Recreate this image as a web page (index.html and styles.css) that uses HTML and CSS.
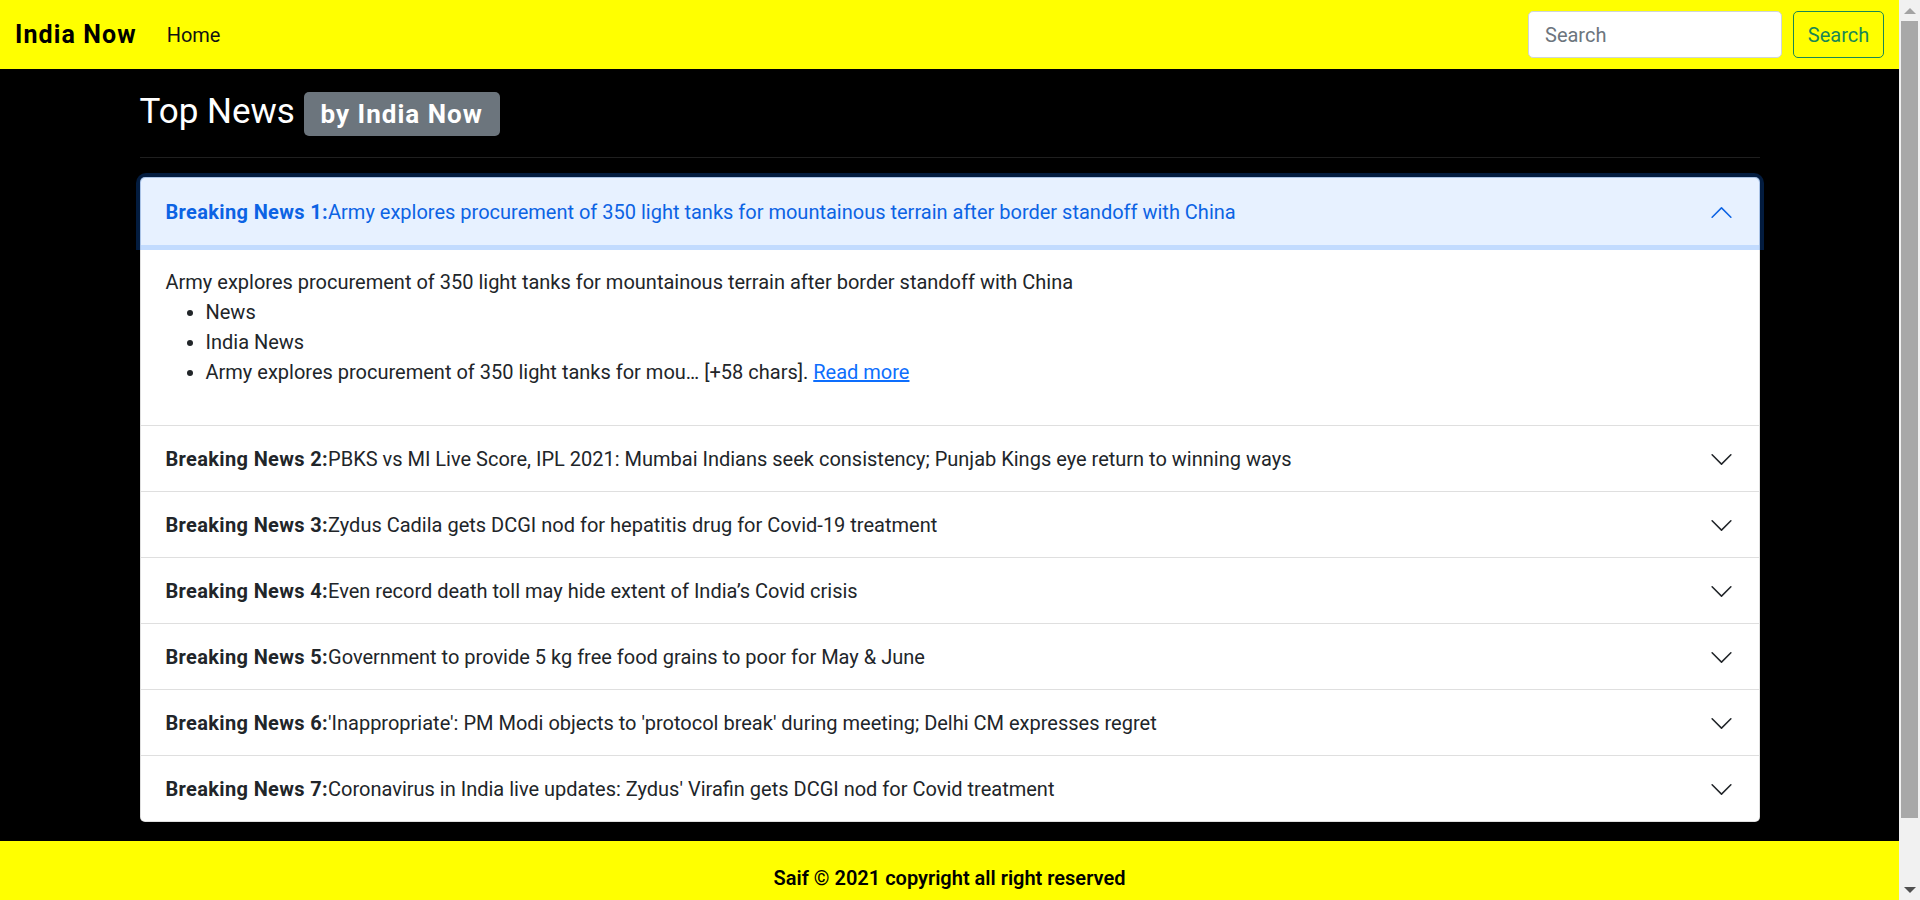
FILE: index.html
```html
<!DOCTYPE html>
<html lang="en">
<head>
<meta charset="utf-8">
<title>India Now</title>
<link rel="stylesheet" href="styles.css">
</head>
<body>
<nav class="navbar">
  <div class="nav-left">
    <a class="brand" href="#">India Now</a>
    <a class="nav-link" href="#">Home</a>
  </div>
  <form class="search">
    <input class="search-input" type="search" placeholder="Search">
    <button class="search-btn" type="button">Search</button>
  </form>
</nav>

<main class="main">
  <div class="container">
    <h3 class="title">Top News <span class="badge">by India Now</span></h3>
    <hr class="rule">
    <div class="accordion">
      <div class="acc-item">
        <button class="acc-btn open" type="button"><span class="acc-label"><b class="acc-num">Breaking News 1:</b>Army explores procurement of 350 light tanks for mountainous terrain after border standoff with China</span><svg class="chev" viewBox="0 0 16 16"><path d="M1.646 4.646a.5.5 0 0 1 .708 0L8 10.293l5.646-5.647a.5.5 0 0 1 .708.708l-6 6a.5.5 0 0 1-.708 0l-6-6a.5.5 0 0 1 0-.708z"/></svg></button>
        <div class="acc-body">
          Army explores procurement of 350 light tanks for mountainous terrain after border standoff with China
          <ul class="acc-list">
            <li>News</li>
            <li>India News</li>
            <li>Army explores procurement of 350 light tanks for mou… [+58 chars]. <a class="more" href="#">Read more</a></li>
          </ul>
        </div>
      </div>
      <div class="acc-item">
        <button class="acc-btn" type="button"><span class="acc-label"><b class="acc-num">Breaking News 2:</b>PBKS vs MI Live Score, IPL 2021: Mumbai Indians seek consistency; Punjab Kings eye return to winning ways</span><svg class="chev" viewBox="0 0 16 16"><path d="M1.646 4.646a.5.5 0 0 1 .708 0L8 10.293l5.646-5.647a.5.5 0 0 1 .708.708l-6 6a.5.5 0 0 1-.708 0l-6-6a.5.5 0 0 1 0-.708z"/></svg></button>
      </div>
      <div class="acc-item">
        <button class="acc-btn" type="button"><span class="acc-label"><b class="acc-num">Breaking News 3:</b>Zydus Cadila gets DCGI nod for hepatitis drug for Covid-19 treatment</span><svg class="chev" viewBox="0 0 16 16"><path d="M1.646 4.646a.5.5 0 0 1 .708 0L8 10.293l5.646-5.647a.5.5 0 0 1 .708.708l-6 6a.5.5 0 0 1-.708 0l-6-6a.5.5 0 0 1 0-.708z"/></svg></button>
      </div>
      <div class="acc-item">
        <button class="acc-btn" type="button"><span class="acc-label"><b class="acc-num">Breaking News 4:</b>Even record death toll may hide extent of India’s Covid crisis</span><svg class="chev" viewBox="0 0 16 16"><path d="M1.646 4.646a.5.5 0 0 1 .708 0L8 10.293l5.646-5.647a.5.5 0 0 1 .708.708l-6 6a.5.5 0 0 1-.708 0l-6-6a.5.5 0 0 1 0-.708z"/></svg></button>
      </div>
      <div class="acc-item">
        <button class="acc-btn" type="button"><span class="acc-label"><b class="acc-num">Breaking News 5:</b>Government to provide 5 kg free food grains to poor for May &amp; June</span><svg class="chev" viewBox="0 0 16 16"><path d="M1.646 4.646a.5.5 0 0 1 .708 0L8 10.293l5.646-5.647a.5.5 0 0 1 .708.708l-6 6a.5.5 0 0 1-.708 0l-6-6a.5.5 0 0 1 0-.708z"/></svg></button>
      </div>
      <div class="acc-item">
        <button class="acc-btn" type="button"><span class="acc-label"><b class="acc-num">Breaking News 6:</b>'Inappropriate': PM Modi objects to 'protocol break' during meeting; Delhi CM expresses regret</span><svg class="chev" viewBox="0 0 16 16"><path d="M1.646 4.646a.5.5 0 0 1 .708 0L8 10.293l5.646-5.647a.5.5 0 0 1 .708.708l-6 6a.5.5 0 0 1-.708 0l-6-6a.5.5 0 0 1 0-.708z"/></svg></button>
      </div>
      <div class="acc-item">
        <button class="acc-btn" type="button"><span class="acc-label"><b class="acc-num">Breaking News 7:</b>Coronavirus in India live updates: Zydus' Virafin gets DCGI nod for Covid treatment</span><svg class="chev" viewBox="0 0 16 16"><path d="M1.646 4.646a.5.5 0 0 1 .708 0L8 10.293l5.646-5.647a.5.5 0 0 1 .708.708l-6 6a.5.5 0 0 1-.708 0l-6-6a.5.5 0 0 1 0-.708z"/></svg></button>
      </div>
    </div>
  </div>
</main>

<footer class="footer">
  <p class="copy">Saif © 2021 copyright all right reserved</p>
</footer>

<div class="scrollbar" aria-hidden="true">
  <div class="sb-arrow sb-up"></div>
  <div class="sb-track"><div class="sb-thumb"></div></div>
  <div class="sb-arrow sb-down"></div>
</div>
</body>
</html>
```
FILE: styles.css
```css
* { box-sizing: border-box; }

html, body {
  margin: 0;
  padding: 0;
}

body {
  margin-right: 21px;
  background: #000;
  font-family: Roboto, "Liberation Sans", sans-serif;
  font-size: 20px;
  line-height: 1.5;
  color: #212529;
}

/* Navbar */
.navbar {
  height: 69px;
  background: #ffff00;
  display: flex;
  align-items: center;
  justify-content: space-between;
  padding: 0 15px;
}

.nav-left {
  display: flex;
  align-items: center;
}

.brand {
  font-size: 25px;
  font-weight: 700;
  letter-spacing: 1.1px;
  color: #000;
  text-decoration: none;
  margin-right: 20px;
  line-height: 37px;
}

.nav-link {
  color: #111;
  text-decoration: none;
  padding: 0 10px;
  font-size: 20px;
}

.search {
  display: flex;
  align-items: center;
  margin: 0;
}

.search-input {
  width: 254px;
  height: 47px;
  margin-right: 11px;
  padding: 7px 16px;
  font-family: inherit;
  font-size: 20px;
  color: #212529;
  background: #fff;
  border: 1px solid #ced4da;
  border-radius: 5px;
  outline: none;
}

.search-input::placeholder {
  color: #6c757d;
}

.search-btn {
  width: 91px;
  height: 47px;
  padding: 0;
  font-family: inherit;
  font-size: 20px;
  color: #198754;
  background: transparent;
  border: 1px solid #198754;
  border-radius: 5px;
}

/* Main */
.main {
  padding: 0 0 19px;
}

.container {
  width: 1620px;
  margin: 0 auto;
}

.title {
  margin: 0;
  padding-top: 22px;
  font-size: 35px;
  font-weight: 400;
  line-height: 1.2;
  color: #fff;
}

.badge {
  display: inline-block;
  padding: 9px 17px;
  font-size: 26px;
  font-weight: 700;
  letter-spacing: 1px;
  line-height: 1;
  color: #fff;
  background: #6c757d;
  border-radius: 5px;
  vertical-align: baseline;
}

.rule {
  margin: 21px 0 19px;
  border: 0;
  border-top: 1px solid rgba(255, 255, 255, 0.12);
}

/* Accordion */
.accordion {
  background: #fff;
  border: 1px solid rgba(0, 0, 0, 0.125);
  border-radius: 5px;
}

.acc-item + .acc-item {
  border-top: 1px solid #dfdfdf;
}

.acc-btn {
  position: relative;
  display: flex;
  align-items: center;
  width: 100%;
  padding: 21px 25px 19px;
  font-family: inherit;
  font-size: 20px;
  line-height: 25px;
  text-align: left;
  color: #212529;
  background: #fff;
  border: 0;
  border-radius: 0;
}

.acc-item:first-child .acc-btn {
  border-radius: 5px 5px 0 0;
  padding: 22px 25px 20px;
}

.acc-item:last-child .acc-btn {
  border-radius: 0 0 5px 5px;
}

.acc-btn.open {
  z-index: 3;
  color: #0c63e4;
  background: #e7f1ff;
  box-shadow: 0 0 0 5px rgba(13, 110, 253, 0.25);
}

.acc-label {
  flex: 1;
}

.acc-num {
  font-weight: 700;
  letter-spacing: 0.35px;
}

.chev {
  flex-shrink: 0;
  width: 25px;
  height: 25px;
  margin-left: auto;
  fill: #212529;
}

.acc-btn.open .chev {
  fill: #0c63e4;
  transform: rotate(180deg);
}

.acc-body {
  padding: 22px 25px 20px;
  line-height: 30px;
}

.acc-list {
  margin: 0 0 18px;
  padding-left: 40px;
}

.more {
  color: #0d6efd;
  text-decoration: underline;
}

/* Footer */
.footer {
  background: #ffff00;
  padding: 22px 0 80px;
  text-align: center;
}

.copy {
  margin: 0;
  font-size: 20px;
  font-weight: 600;
  color: #000;
  line-height: 30px;
}

/* Browser scrollbar (drawn, since the capture has none) */
.scrollbar {
  position: fixed;
  top: 0;
  right: 0;
  width: 21px;
  height: 100vh;
  display: flex;
  flex-direction: column;
  background: #f1f1f1;
}

.sb-arrow {
  height: 21px;
  display: flex;
  align-items: center;
  justify-content: center;
}

.sb-up::before {
  content: "";
  border-left: 6px solid transparent;
  border-right: 6px solid transparent;
  border-bottom: 6px solid #a3a3a3;
}

.sb-down::before {
  content: "";
  border-left: 6px solid transparent;
  border-right: 6px solid transparent;
  border-top: 6px solid #505050;
}

.sb-track {
  flex: 1;
  padding: 0 2px;
}

.sb-thumb {
  height: 797px;
  background: #a8a8a8;
}
```
